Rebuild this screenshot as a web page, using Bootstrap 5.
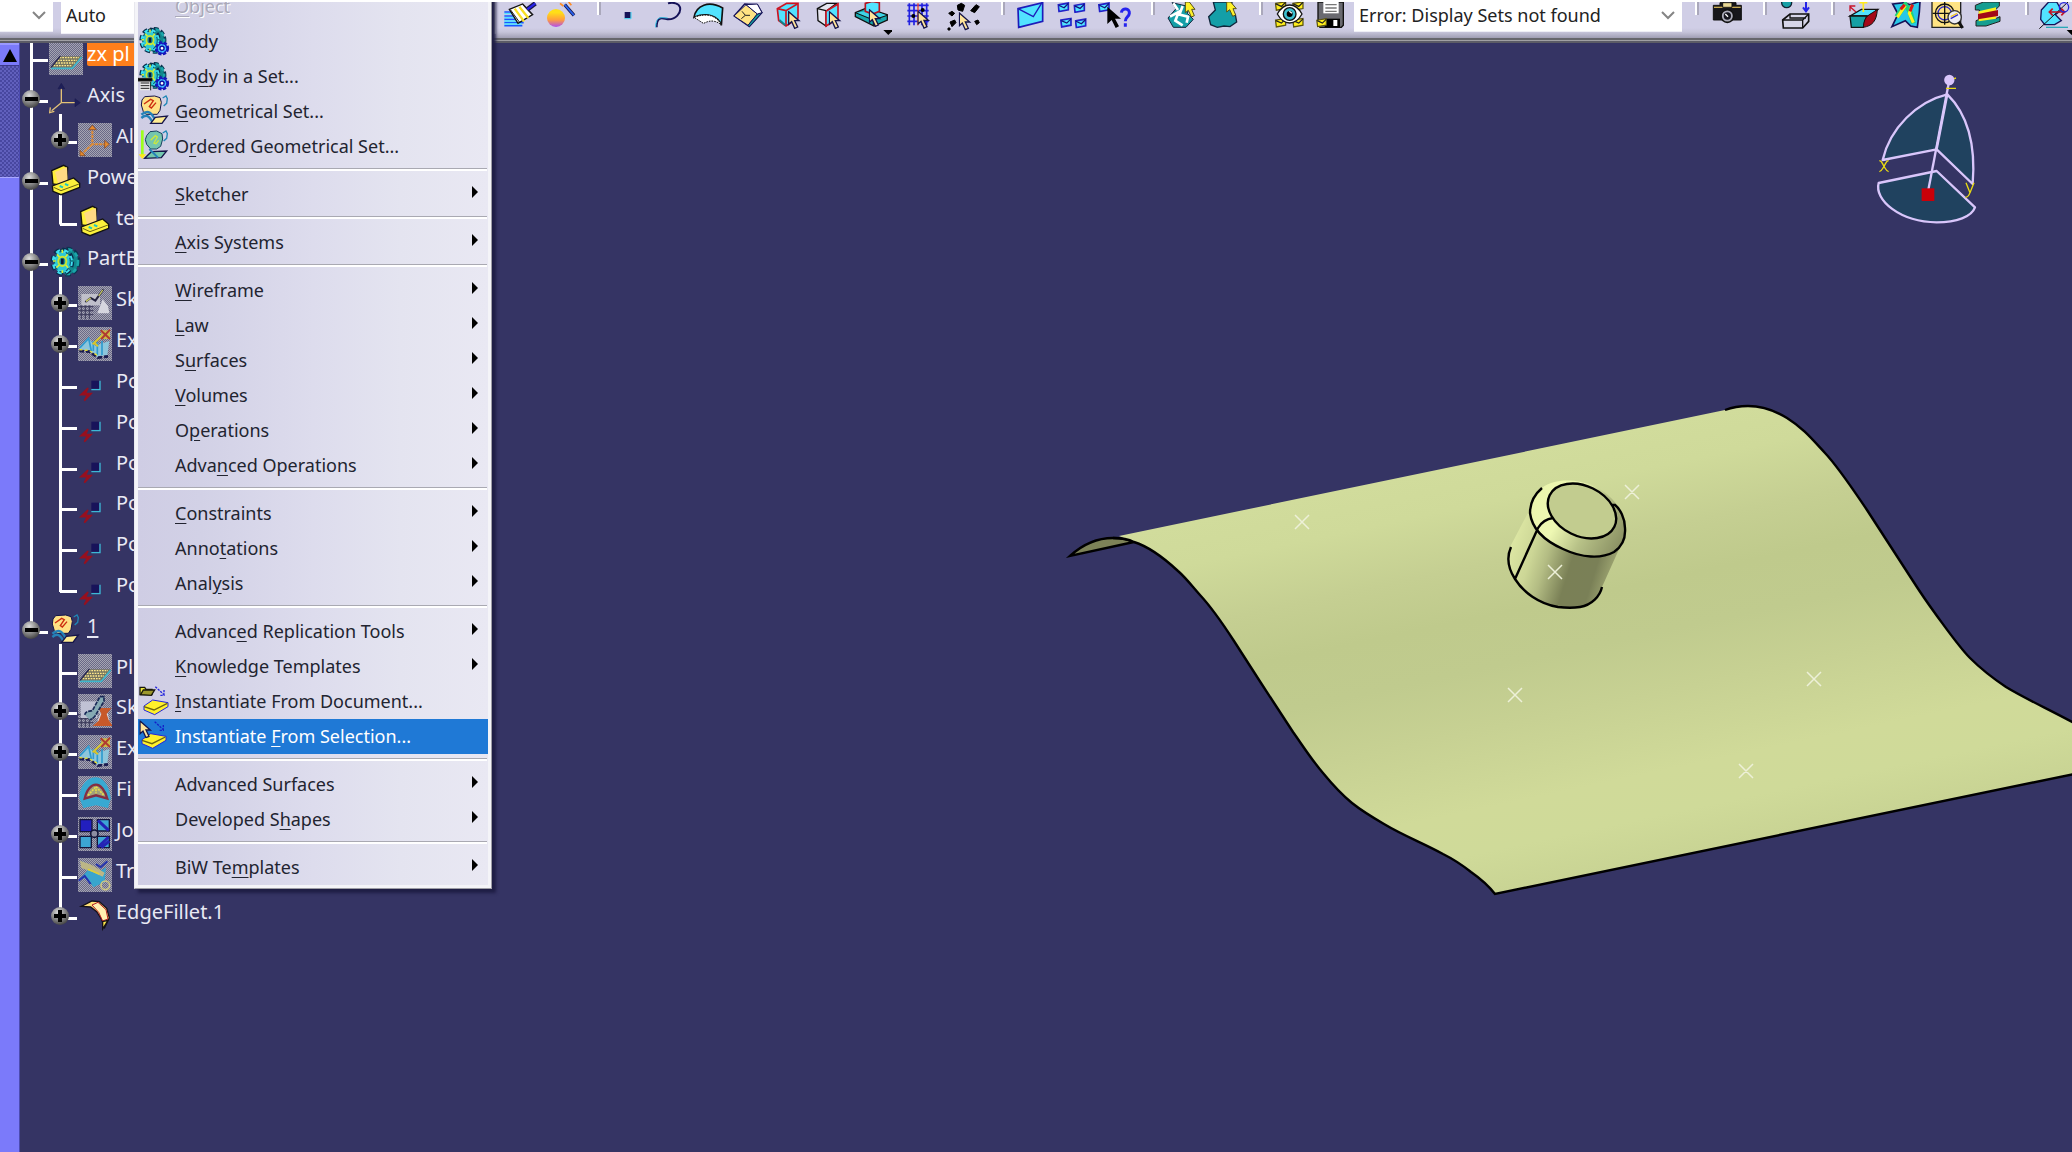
<!DOCTYPE html>
<html lang="en">
<head>
<meta charset="utf-8">
<meta name="viewport" content="width=device-width, initial-scale=1">
<title>Part design</title>
<link rel="stylesheet" href="https://cdn.jsdelivr.net/npm/bootstrap@5.3.0/dist/css/bootstrap.min.css">
<style>
:root{--ink:#353464;--ui:"Noto Sans","Open Sans",sans-serif}
body{font-family:var(--ui);background:var(--ink);border-top:2px solid #fff;overflow:hidden}
.toolstrip{height:41px;background:linear-gradient(#d0cee6 0 26px,#c6c4da 30px,#a09eb4 36px,#66666c 36px,#66666c 38px,#a0a0a4 38px,#a0a0a4 39px,#5c5c66 39px)}
.toolstrip svg{width:40px;height:34px;display:block}
.tool{width:42px;height:34px;padding:0;border:0;border-radius:0;overflow:hidden;flex:none}
.tool-s{width:40px}
.tool-m{width:44px}
.tool-l{width:52px}
.divide{width:24px;height:13px;flex:none;background:linear-gradient(90deg,#fff 2px,#aaa8bb 2px) 13px 0/4px 100% no-repeat}
.divide-w{width:26px}
.combo{height:30px;border:0;border-radius:0;border-bottom:1px solid #efeef6;background:#fff;color:#222;font-size:18px;line-height:24px;padding:0 5px 4px;appearance:none;flex:none;outline:0}
.combo-box{position:relative;flex:none}
.combo-box .chev{position:absolute;right:7px;top:8px;width:14px;height:10px;pointer-events:none}
.combo-a,.combo-a .combo{width:53px}
.combo-b .combo{width:435px;height:32px;padding:0 5px 6px}
.combo-c .combo{width:328px}
.slider-col{width:20px;background:#7b7afa;border-right:1px solid #4c4bb0}
.step{height:22px;padding:0;border:0;background:#7b7afa;display:flex;align-items:center;justify-content:center;border-top:2px solid #9a99ff}
.groove{height:113px;border-top:1px solid #3c3b8c;border-bottom:1px solid #a9a8ff;background:repeating-conic-gradient(#4847a0 0 25%,#6160bd 0 50%) 0 0/4px 4px}
.tree{height:898px;margin-top:-5px;display:grid;grid-auto-rows:1fr;color:#e9e9f4;font-size:20px;line-height:25px}
.node{--a:100%;--b:0;--bp:0;display:flex;align-items:center;background:linear-gradient(#fff,#fff) 10px 0/3px var(--a) no-repeat,linear-gradient(#fff,#fff) 39px var(--bp)/3px var(--b) no-repeat;padding-left:2px;min-height:0}
.node.sub{padding-left:31px;--b:100%}
.node.parent{--b:6px;--bp:100%}
.node.final{--b:calc(50% + 3px)}
.node.tail{--a:0}
.node.stop{--a:50%}
.joint{width:26px;height:18px;flex:none;background:linear-gradient(#fff,#fff) 9px 10px/17px 3px no-repeat;margin-right:1px}
.joint svg{width:18px;height:18px;display:block}
.pic{width:34px;height:34px;flex:none;margin-right:4px}
.node a{color:inherit;text-decoration:none;margin-bottom:9px;white-space:nowrap}
.node a.picked{background:#ff7f1b;color:#fff;width:150px;border-radius:2px}
.node a.under{text-decoration:underline;text-underline-offset:3px}
.popup.dropdown-menu{display:block;position:absolute;left:134px;top:-17px;width:358px;padding:3px;border:1px solid #9d9da5;border-left-color:#e8e8ee;border-radius:0;z-index:5;background:linear-gradient(90deg,#cfcde4 0,#d2d1e6 18%,#dddced 50%,#e4e4f0 75%,#e9e8f3) content-box,#f4f4f8;box-shadow:4px 4px 3px #1f1e45;font-size:18px}
.popup .dropdown-item{height:35px;padding:0 10px 2px 0;display:flex;align-items:center;color:#222430;line-height:24px}
.popup .dropdown-item.active{background:#1f79d6;color:#fff}
.popup .dropdown-item.disabled{color:#aaa9b8;text-shadow:1px 1px #fff}
.popup .dropdown-item u{text-underline-offset:3px}
.popup .slot{width:37px;height:33px;flex:none}
.popup .slot svg{width:34px;height:34px;display:block}
.popup .tip{width:6px;height:12px;margin:0 0 4px auto}
.popup .dropdown-divider{margin:4px 1px 6px 0;height:3px;border:0;border-top:1px solid #a9a9b2;background:#fff;opacity:1}
.scene{position:absolute;inset:0;width:100%;height:100%}
</style>
<script src="https://cdn.jsdelivr.net/npm/bootstrap@5.3.0/dist/js/bootstrap.bundle.min.js"></script>
</head>
<body class="vh-100 d-flex flex-column position-relative">

<svg width="0" height="0" class="position-absolute" aria-hidden="true">
<defs>
<radialGradient id="ball" cx=".4" cy=".3" r=".75"><stop offset="0" stop-color="#ddd"/><stop offset=".5" stop-color="#8b8b8b"/><stop offset="1" stop-color="#3c3c3c"/></radialGradient>
<pattern id="dither" width="6" height="6" patternUnits="userSpaceOnUse"><path fill="#6a6987" d="M0 0h6v6H0z"/><path fill="#a5a5b2" d="M0 0h3v3H0zM3 3h3v3H3z"/></pattern>
<symbol id="minus" viewBox="0 0 18 18"><circle cx="9" cy="9" r="9" fill="url(#ball)"/><path d="M3 7h13v4H3z"/></symbol>
<symbol id="plus" viewBox="0 0 18 18"><circle cx="9" cy="9" r="9" fill="url(#ball)"/><path d="M3 7h4V3h4v4h4v4h-4v4H7v-4H3z"/></symbol>
<symbol id="arrow" viewBox="0 0 6 12"><path d="M0 0l6 6-6 6z"/></symbol>
<symbol id="pointer" viewBox="0 0 40 54"><path d="M2 2v38l9-8 9 20 9-4-9-19h13z" fill="#ffe49a" stroke="#151448" stroke-width="4"/></symbol>
<symbol id="mail" viewBox="0 0 30 24"><path d="M2 6l24-4v16L4 22z" fill="#4fe4ff" stroke="#2322c8" stroke-width="4"/><path d="M3 7l13 6L26 3" fill="none" stroke="#15147a" stroke-width="3"/></symbol>
<symbol id="ymail" viewBox="0 0 30 24"><path d="M2 6l24-4v16L4 22z" fill="#ffee1c" stroke="#5a5410" stroke-width="3"/><path d="M3 7l13 6L26 3" fill="none" stroke="#222" stroke-width="3"/></symbol>
<symbol id="gear" viewBox="0 0 102 102"><ellipse cx="56" cy="50" rx="32" ry="38" fill="#0d6f78" stroke="#0b3550" stroke-width="13" stroke-dasharray="15 8"/><ellipse cx="56" cy="50" rx="31" ry="37" fill="#12878c" stroke="#1aa6aa" stroke-width="8" stroke-dasharray="13 10"/><ellipse cx="40" cy="50" rx="27" ry="34" fill="none" stroke="#0a2d4c" stroke-width="17" stroke-dasharray="15 9"/><ellipse cx="40" cy="50" rx="26" ry="33" fill="#2fc9d4" stroke="#3fe0f2" stroke-width="11" stroke-dasharray="12 12"/><ellipse cx="40" cy="50" rx="24" ry="31" fill="none" stroke="#0d5c74" stroke-width="4" stroke-dasharray="12 8"/><path d="M24 28l8 9M56 28l-7 9M22 68l9-8M57 68l-7-9M40 14v10M12 48h8M40 84v-8" stroke="#d6f03a" stroke-width="5"/><ellipse cx="40" cy="49" rx="12" ry="14" fill="#1b8c9c" stroke="#cbe531" stroke-width="6"/><path d="M36 41h8v16h-8z" fill="#061c3c"/></symbol>
<symbol id="minigear" viewBox="0 0 48 48"><circle cx="24" cy="24" r="16" fill="#2f8cff" stroke="#1515b8" stroke-width="9" stroke-dasharray="9 4"/><circle cx="24" cy="24" r="14" fill="#329bff" stroke="#1717bd" stroke-width="4"/><circle cx="24" cy="24" r="10" fill="none" stroke="#46c8ff" stroke-width="4" stroke-dasharray="6 4"/><circle cx="24" cy="24" r="6" fill="#fff" stroke="#10109a" stroke-width="4"/></symbol>
<symbol id="bodyset" viewBox="0 0 102 102"><use href="#gear" x="0" y="4" width="92" height="92"/><use href="#minigear" x="46" y="48" width="52" height="50"/></symbol>
<symbol id="geoset" viewBox="0 0 102 102"><path d="M12 18l8-10 30-2 16 5 4 14-4 24-8 12H24l-8-8-6-20z" fill="#ffe184" stroke="#151448" stroke-width="3"/><path d="M18 30l20-14 8 4-12 18 6 4 14-16" fill="none" stroke="#cc2c10" stroke-width="4"/><path d="M10 62c22-18 32-4 44 20M10 72c14-12 24-8 34 14" fill="none" stroke="#2582b8" stroke-width="7"/><path d="M38 88l14-18 36-4-16 22z" fill="#ffec92" stroke="#151448" stroke-width="4"/><path d="M74 12l10-6 4 8-2 14-9 8" fill="none" stroke="#1f87b6" stroke-width="4"/></symbol>
<symbol id="orderset" viewBox="0 0 102 102"><path d="M26 20l10-12 20-2 16 8 2 16-6 22-12 8H38l-12-14-4-14z" fill="#74c5ae" stroke="#174060" stroke-width="3"/><path d="M38 34l14-14 6 4-10 18 6 2 8-10" fill="none" stroke="#cbe83d" stroke-width="4"/><path d="M20 88l20-20 46-2-16 20z" fill="#72c7ad" stroke="#151448" stroke-width="4"/><path d="M34 60l26 26" stroke="#2582b8" stroke-width="6"/><path d="M74 12l10-6 4 8-2 14-9 8" fill="none" stroke="#1f87b6" stroke-width="4"/><path d="M13 4v78" stroke="#9dff1d" stroke-width="8"/><path d="M2 76h22L13 90z" fill="#ffe81c"/></symbol>
<symbol id="template" viewBox="0 0 102 102"><path d="M8 20L44 4l12 6-2 40-28 12-14-2z" fill="#fff03a" stroke="#111" stroke-width="4"/><path d="M18 24l36-14 2 40-28 10z" fill="#ffda84"/><path d="M10 66l16-6 48-18 18 16v12L36 92 12 82z" fill="#fbf03c" stroke="#111" stroke-width="4"/><path d="M14 70l22 10 54-20" fill="none" stroke="#6c6410" stroke-width="3"/><path d="M32 66l10 4M48 60l10 4" stroke="#20c6c0" stroke-width="6"/></symbol>
<symbol id="plane" viewBox="0 0 102 102"><path fill="url(#dither)" d="M0 0h102v102H0z"/><path d="M6 80L34 46h64L70 80z" fill="#77755e"/><path d="M14 74h56M20 66h58M26 58h58M32 50h58" stroke="#ffe98c" stroke-width="4" stroke-dasharray="5 3"/><path d="M6 82h64l28-34" fill="none" stroke="#3fb6cc" stroke-width="5"/><path d="M6 79L34 45" stroke="#23224e" stroke-width="4"/></symbol>
<symbol id="axisys" viewBox="0 0 102 102"><path d="M37 12v50L8 86M37 62h46" fill="none" stroke="#e3c276" stroke-width="4"/><path d="M27 20L37 4l10 16zM78 50l16 12-16 12z" fill="#1e1f58" stroke="#1b1b50" stroke-width="2"/><path d="M4 76l-2 16 14-4" fill="none" stroke="#e3c276" stroke-width="4"/></symbol>
<symbol id="absaxis" viewBox="0 0 102 102"><path fill="url(#dither)" d="M0 0h102v102H0z"/><path d="M43 12v52h44M43 64L8 96" fill="none" stroke="#df8d38" stroke-width="6" stroke-dasharray="10 2"/><path d="M32 20L43 6l12 14zM80 52l14 12-14 12zM6 82v16h16z" fill="#e68a2d" stroke="#733c22" stroke-width="2"/></symbol>
<symbol id="sketch" viewBox="0 0 102 102"><path fill="url(#dither)" d="M0 0h102v102H0z"/><path d="M10 24h56v34H10z" fill="#c0c0cb"/><path d="M0 62h46M0 74h46M0 86h46M10 58v42M22 58v42M34 58v42" stroke="#393858" stroke-width="3"/><path d="M22 48l16-12 14 8 24-34" fill="none" stroke="#24233f" stroke-width="6"/><path d="M24 46l14-10M62 30l12-18" stroke="#cccd63" stroke-width="4"/><path d="M58 82l16-42 16 20 4 22z" fill="#d6d6df"/></symbol>
<symbol id="sketchred" viewBox="0 0 102 102"><use href="#sketch"/><path d="M8 22h50v50H8z" fill="#c0c2d4"/><path d="M44 96l18-16 8-20-8-18h38l-14 18 6 18 12 18z" fill="#c8592a"/><path d="M20 62c4-14 18-8 24-14l22-40h12v14L50 68l-14 10" fill="#86aab4" stroke="#182856" stroke-width="5" stroke-dasharray="12 3"/></symbol>
<symbol id="extrude" viewBox="0 0 102 102"><path fill="url(#dither)" d="M0 0h102v102H0z"/><path d="M4 66l26-34 22 24 42-14-6 42-30 6-24-18z" fill="#8dc6dc"/><path d="M6 62l26-28 8 38M58 46v38M72 42v42M46 42v30" fill="none" stroke="#2f9bd0" stroke-width="5"/><path d="M4 72l30 2 26 18 30-4" fill="none" stroke="#191b50" stroke-width="8" stroke-dasharray="14 6"/><path d="M4 68l28 2 28 16" fill="none" stroke="#e8df31" stroke-width="4" stroke-dasharray="9 7"/><path d="M44 52l30-28M46 46l14 12" stroke="#d8c52a" stroke-width="6"/><path d="M70 10h26v26H70z" fill="#c9ba48"/><path d="M68 10l28 26M70 36l26-28" stroke="#b03a31" stroke-width="6"/></symbol>
<symbol id="point" viewBox="0 0 102 102"><path d="M40 38h24v24H40z" fill="#18135a"/><path d="M40 65h26V38" fill="none" stroke="#3cb8d6" stroke-width="4"/><path d="M30 60L9 80h20l-10 18 20-21H22z" fill="#a60c19" stroke="#96101f" stroke-width="5"/></symbol>
<symbol id="fill" viewBox="0 0 102 102"><path fill="url(#dither)" d="M0 0h102v102H0z"/><path d="M4 66C6 24 30 4 54 4s42 30 44 64l-8 28-36-8-38 8z" fill="#38a9d2"/><path d="M20 68c6-28 20-42 34-42s28 18 34 42l-34-10z" fill="#a0a07a" stroke="#842e43" stroke-width="7"/><path d="M30 58l24-26 24 26M54 40v12" fill="none" stroke="#ebdc46" stroke-width="5" stroke-dasharray="6 3"/></symbol>
<symbol id="join" viewBox="0 0 102 102"><path fill="url(#dither)" d="M0 0h102v102H0z"/><path d="M6 8h36v36H6z" fill="#221fbe" stroke="#14153a" stroke-width="4"/><path d="M58 8h36v34H58zM6 58h34v34H6zM58 58h36v34H58z" fill="#3ca5d4" stroke="#14153a" stroke-width="4"/><path d="M60 10l32 30M60 90l32-30M70 92l24-20" stroke="#2422b4" stroke-width="9"/><circle cx="49" cy="50" r="11" fill="#8d8da2" stroke="#14153a" stroke-width="5"/></symbol>
<symbol id="trim" viewBox="0 0 102 102"><path fill="url(#dither)" d="M0 0h102v102H0z"/><path d="M4 64l24-26-16-28 30 16 24 14 18-12-4 44-34 16-18-28z" fill="#39a5cd"/><path d="M6 8l34 12 40 24-6 12-30-14-34-12z" fill="#bcb686"/><path d="M30 34l34 14" stroke="#dccf38" stroke-width="5"/><path d="M2 68l18-14 18 24M54 18l14 10 20-18" fill="none" stroke="#2432ad" stroke-width="6"/><circle cx="82" cy="82" r="13" fill="none" stroke="#cfc883" stroke-width="5"/></symbol>
<symbol id="fillet" viewBox="0 0 102 102"><path d="M10 22L42 6l22 2 22 20 8 28-14 30-10-26-14-22-18-14z" fill="#ffe178" stroke="#141019" stroke-width="4"/><path d="M42 18l18-8 24 22 6 28-16 6-12-26z" fill="#ffefb0" stroke="#b41d22" stroke-width="3"/><path d="M74 68l16-4-16 26z" fill="#ffe94b" stroke="#141019" stroke-width="4"/></symbol>
<symbol id="slab" viewBox="0 0 102 102"><path d="M18 66l26-18 46 8v12L50 92 18 78z" fill="#fff12b" stroke="#2425dc" stroke-width="3"/><path d="M18 68l30 10 40-20" fill="none" stroke="#6c6410" stroke-width="4"/></symbol>
<symbol id="fromdoc" viewBox="0 0 102 102"><path d="M6 10h14l4 6h18v16H6z" fill="#eee83d" stroke="#19190c" stroke-width="4"/><path d="M8 32l8-14h34L40 34z" fill="#9c982d" stroke="#19190c" stroke-width="4"/><path d="M52 8l26 24m0-14v16H64" fill="none" stroke="#2425dc" stroke-width="4" stroke-dasharray="7 3"/><use href="#slab"/></symbol>
<symbol id="fromsel" viewBox="0 0 102 102"><use href="#slab" x="-6" y="-4" width="102" height="102"/><path d="M50 8l26 24m0-14v16H62" fill="none" stroke="#1520c8" stroke-width="4" stroke-dasharray="7 3"/><use href="#pointer" x="4" y="4" width="40" height="54"/></symbol>
</defs>
</svg>

<header class="toolstrip d-flex align-items-start overflow-hidden" role="toolbar" aria-label="Tools">
  <div class="combo-box combo-a me-1">
    <select class="combo" aria-label="Line style"><option></option></select>
    <svg class="chev" viewBox="0 0 14 10"><path d="M1 2l6 6 6-6" fill="none" stroke="#858585" stroke-width="2"/></svg>
  </div>
  <div class="combo-box combo-b ps-1 me-1"><select class="combo" aria-label="Render mode"><option>Auto</option></select></div>

  <button class="btn tool" aria-label="Painter"><svg viewBox="0 0 120 102"><g transform="translate(-24 -6)"><path d="M37 36h34M37 48h44M37 58h52M37 68h58M37 77h54" stroke="#1759ff" stroke-width="5"/><path d="M37 41h34M37 53h44M37 63h50M37 72h52" stroke="#4fe5ff" stroke-width="4"/><path d="M52 28l40-16 30 32-44 26z" fill="#fff" stroke="#111" stroke-width="4"/><path d="M68 26l28 38M82 20l27 34" stroke="#f8df22" stroke-width="7"/><path d="M56 30l26 36M94 16l26 28" stroke="#222" stroke-width="3"/><path d="M106 28l24-18" stroke="#151448" stroke-width="14"/><path d="M106 28l24-18" stroke="#2823e8" stroke-width="7"/></g></svg></button>
  <button class="btn tool" aria-label="Apply material"><svg viewBox="0 0 120 102"><defs><linearGradient id="orb" x2="0" y2="1"><stop offset=".2" stop-color="#ffde17"/><stop offset=".6" stop-color="#ff9d3d"/><stop offset="1" stop-color="#b04df0"/></linearGradient></defs><circle cx="42" cy="48" r="27" fill="url(#orb)"/><path d="M68 8l28 32" stroke="#151448" stroke-width="10"/><path d="M68 8l28 32" stroke="#2b64ef" stroke-width="5"/><path d="M54 4l10 8M80 0l8 10" stroke="#ff8b20" stroke-width="5"/></svg></button>
  <span class="divide"></span>
  <button class="btn tool tool-s" aria-label="Point"><svg viewBox="0 0 120 102"><path d="M50 30h18v18H50z" fill="#151258"/><path d="M49 50h20V30" fill="none" stroke="#3bd2f0" stroke-width="3"/></svg></button>
  <button class="btn tool tool-s" aria-label="Spline"><svg viewBox="0 0 120 102"><path d="M26 76c0-40 22-24 36-24 20 0 38-18 34-36-3-12-20-16-36-12" fill="none" stroke="#151258" stroke-width="6"/><path d="M23 76c0-38 22-28 36-28" fill="none" stroke="#39cdee" stroke-width="3"/></svg></button>
  <button class="btn tool tool-s" aria-label="Surface"><svg viewBox="0 0 120 102"><path d="M18 46C24 10 62-6 104 18l-4 52C90 42 58 30 18 46z" fill="#52e3ff" stroke="#111" stroke-width="5"/><path d="M18 46c40-14 66-6 82 22C70 46 52 64 46 64z" fill="#fff" stroke="#111" stroke-width="3" stroke-dasharray="5 3"/></svg></button>
  <button class="btn tool tool-s" aria-label="Isometric view"><svg viewBox="0 0 120 102"><path d="M18 42L50 6l38 2 14 24-38 42z" fill="#fff" stroke="#151258" stroke-width="4"/><path d="M18 42L54 8l34 28-28 34z" fill="#ffe383" stroke="#151258" stroke-width="3"/><path d="M88 36l14-4-38 42-4-4z" fill="#159c9c" stroke="#151258" stroke-width="3"/><path d="M54 8l34-2 14 26-14 4z" fill="#fff" stroke="#151258" stroke-width="3"/><path d="M42 28l10 12h14M52 40L40 50" stroke="#222" stroke-width="3" fill="none"/></svg></button>
  <button class="btn tool tool-s" aria-label="Pick box"><svg viewBox="0 0 120 102"><path d="M28 20L56 4h34v44L54 72 32 56z" fill="#52e3ff" stroke="#cc1422" stroke-width="5"/><path d="M28 20l26 6 34-20M54 28v44" fill="none" stroke="#cc1422" stroke-width="5"/><path d="M34 54l18 16" stroke="#12808a" stroke-width="6"/><use href="#pointer" x="60" y="26" width="40" height="56"/></svg></button>
  <button class="btn tool tool-s" aria-label="Pick face"><svg viewBox="0 0 120 102"><path d="M28 20L56 4h30L54 28v44L30 56z" fill="#e4e4ee" stroke="#111" stroke-width="4"/><path d="M54 28L90 6v44L54 72z" fill="#52e3ff" stroke="#cc1422" stroke-width="5"/><path d="M28 20l26 6" stroke="#111" stroke-width="4"/><use href="#pointer" x="62" y="26" width="40" height="56"/></svg></button>
  <button class="btn tool tool-l ps-1" aria-label="Pick pad"><svg viewBox="0 0 120 102"><path d="M10 32l34-14 62 20v16L66 72 10 44z" fill="#16a8ae" stroke="#111" stroke-width="4"/><path d="M14 32l50 20 38-12-40-16z" fill="#3fd4e6"/><path d="M10 32l54 22 42-14M64 54v16" fill="none" stroke="#111" stroke-width="3"/><path d="M40 4l20-6 22 4v26l-20 8-22-8z" fill="#52e3ff" stroke="#b51321" stroke-width="5"/><use href="#pointer" x="50" y="20" width="40" height="56"/><path d="M94 84h30l-15 15z"/></svg></button>
  <button class="btn tool tool-m" aria-label="Pick grid"><svg viewBox="0 0 120 102"><path d="M22 10h64M22 26h64M22 42h64M22 58h64M28 4v66M42 4v66M66 4v66M80 4v66" stroke="#2120e0" stroke-width="5"/><path d="M54 4v66" stroke="#ef4325" stroke-width="4"/><circle cx="40" cy="42" r="6"/><circle cx="68" cy="24" r="6"/><use href="#pointer" x="52" y="24" width="40" height="58"/></svg></button>
  <button class="btn tool tool-m" aria-label="Pick points"><svg viewBox="0 0 120 102"><path d="M14 34l10-6 8 6-8 8zM40 10l12-6 10 6-6 18-14-4zM80 26l16-18 10 6-14 18zM18 60l14-6 4 8-12 12zM12 78h6v6h-6zM92 58l10-4 4 8-8 6z" stroke="#000" stroke-width="3"/><use href="#pointer" x="44" y="30" width="40" height="56"/></svg></button>
  <span class="divide"></span>
  <button class="btn tool" aria-label="Send"><svg viewBox="0 0 120 102"><path d="M18 20l74-18v56L20 76z" fill="#52e3ff" stroke="#1d1cba" stroke-width="5"/><path d="M18 20l46 24L90 2" fill="none" stroke="#1d1cba" stroke-width="4"/></svg></button>
  <button class="btn tool" aria-label="Distribute"><svg viewBox="0 0 120 102"><use href="#mail" x="10" y="0" width="38" height="32"/><use href="#mail" x="58" y="2" width="38" height="32"/><use href="#mail" x="18" y="46" width="38" height="32"/><use href="#mail" x="62" y="48" width="38" height="32"/></svg></button>
  <button class="btn tool" aria-label="What's this"><svg viewBox="0 0 120 102"><use href="#mail" x="6" y="0" width="38" height="32"/><path d="M34 14v52l13-12 12 24 10-5-12-23h18z"/><path d="M76 32c2-16 26-14 24 2-1 12-12 10-12 24m0 6v10" fill="none" stroke="#2623ee" stroke-width="9"/></svg></button>
  <span class="divide"></span>
  <button class="btn tool" aria-label="Extract"><svg viewBox="0 0 120 102"><path d="M30 2l12 18-24 28 16 28h38l22-24-18-18 6-20z" fill="#149fa8" stroke="#10263c" stroke-width="3"/><path d="M34 4l14 20M24 44l26-14-10 26 22 14M62 12l-10 26 26 6-4 18" fill="none" stroke="#fff" stroke-width="8"/><path d="M70 0v32l9-7 9 20 9-4-8-19h10L82 0z" fill="#fff12a" stroke="#55511a" stroke-width="3"/></svg></button>
  <button class="btn tool" aria-label="Shape"><svg viewBox="0 0 120 102"><path d="M28 0l6 24-20 20 6 24 20 8 20-4 18 2 20-14-4-22-14-12 4-26z" fill="#149fa8" stroke="#10263c" stroke-width="4"/><path d="M68 0v30l9-7 9 20 9-4-8-19h10L80 0z" fill="#fff12a" stroke="#55511a" stroke-width="3"/></svg></button>
  <span class="divide"></span>
  <button class="btn tool" aria-label="Visualize"><svg viewBox="0 0 120 102"><use href="#ymail" x="14" y="-4" width="38" height="32"/><use href="#ymail" x="66" y="-4" width="38" height="32"/><use href="#ymail" x="14" y="46" width="38" height="32"/><use href="#ymail" x="66" y="46" width="38" height="32"/><path d="M22 36c20-36 54-36 74 0-20 36-54 36-74 0z" fill="#fff" stroke="#151515" stroke-width="4"/><circle cx="59" cy="36" r="19" fill="#3cc0d0" stroke="#111" stroke-width="4"/><circle cx="59" cy="36" r="9"/><path d="M58 28l8 6" stroke="#fff" stroke-width="4"/></svg></button>
  <button class="btn tool" aria-label="Save set"><svg viewBox="0 0 120 102"><path d="M18 0h76v70l-6 6H24l-6-8z" fill="#6a6a70" stroke="#111" stroke-width="4"/><path d="M34 0h46v34H34z" fill="#fff"/><path d="M40 8h34M40 18h34M40 28h34" stroke="#777" stroke-width="4"/><path d="M38 50h46v26H38z"/><path d="M64 54h12v18H64z" fill="#fff"/><use href="#ymail" x="12" y="46" width="36" height="32"/></svg></button>
  <div class="combo-box combo-c">
    <select class="combo" aria-label="Display set"><option>Error: Display Sets not found</option></select>
    <svg class="chev" viewBox="0 0 14 10"><path d="M1 2l6 6 6-6" fill="none" stroke="#858585" stroke-width="2"/></svg>
  </div>
  <span class="divide divide-w"></span>
  <button class="btn tool" aria-label="Capture"><svg viewBox="0 0 120 102"><path d="M16 10h20V2h12v4h22V2h14v8h16v44H16z" fill="#17171b" stroke="#111" stroke-width="3"/><path d="M18 16h80" stroke="#c8aa54" stroke-width="4"/><path d="M44 2h28v14H44z" fill="#ead995" stroke="#111" stroke-width="3"/><circle cx="58" cy="42" r="19" fill="#aaaab8" stroke="#111" stroke-width="5"/><circle cx="58" cy="42" r="11" fill="#15151d"/><path d="M52 36l8 8" stroke="#fff" stroke-width="4"/></svg></button>
  <span class="divide divide-w"></span>
  <button class="btn tool" aria-label="Scan"><svg viewBox="0 0 120 102"><circle cx="32" cy="2" r="15" fill="#159fa6" stroke="#123" stroke-width="4"/><path d="M90 0v26m-9-10l9 12 9-12" fill="none" stroke="#2422e8" stroke-width="6"/><path d="M20 54l22-18h56v22L80 78H22z" fill="#d6d5e8" stroke="#111" stroke-width="5"/><path d="M20 54h60l18-18M80 54v24M42 36v12h48" fill="none" stroke="#111" stroke-width="4"/></svg></button>
  <span class="divide divide-w"></span>
  <button class="btn tool" aria-label="Draft analysis"><svg viewBox="0 0 120 102"><path d="M18 42l34-20h50L80 42z" fill="#52e3ff" stroke="#111" stroke-width="4"/><path d="M18 42h50l-10 34H22z" fill="#16a0a4" stroke="#111" stroke-width="4"/><path d="M58 76c2-38 20-36 42-54-2 36-16 50-42 54z" fill="#a40918" stroke="#111" stroke-width="3"/><path d="M36 30L18 14m0 14V12h16" fill="none" stroke="#c8132a" stroke-width="4"/><path d="M58 30V0M46 2h24" stroke="#ffe91c" stroke-width="5"/></svg></button>
  <button class="btn tool" aria-label="Curvature analysis"><svg viewBox="0 0 120 102"><path d="M20 6l36-4 16 6 30-10-2 32-6 46-20-4-16-16-40 18 18-38z" fill="#28c8e8" stroke="#151258" stroke-width="5"/><path d="M32 44L58 8l14 20 10 36" fill="none" stroke="#20d27a" stroke-width="15"/><path d="M34 46L58 10M78 10l-8 24 12 28" fill="none" stroke="#fff01f" stroke-width="9"/><path d="M44 22l12-14M80 8l-8 20" stroke="#d81818" stroke-width="9"/></svg></button>
  <button class="btn tool" aria-label="Inspect"><svg viewBox="0 0 120 102"><path d="M12 -4h86v80H12z" fill="#ffe383" stroke="#222" stroke-width="4"/><circle cx="50" cy="34" r="28" fill="none" stroke="#111" stroke-width="4"/><circle cx="50" cy="34" r="20" fill="none" stroke="#2825cc" stroke-width="4"/><path d="M50 0v68M14 34h76" stroke="#111" stroke-width="4"/><circle cx="80" cy="46" r="20" fill="#ecebf5" stroke="#333" stroke-width="4"/><path d="M92 60l12 18" stroke="#111" stroke-width="9"/><path d="M68 50l22-12" stroke="#2825cc" stroke-width="4"/><path d="M68 44l20-10" stroke="#f0c42a" stroke-width="4"/></svg></button>
  <button class="btn tool" aria-label="Stress analysis"><svg viewBox="0 0 120 102"><path d="M16 10l24-10h48v12L76 24v26l14-6v14L48 72H18V56l10-4V24H16z" fill="#159e91" stroke="#222" stroke-width="3"/><path d="M26 28l52-12v34l-52 8z" fill="#fff01f"/><path d="M24 36l60-12v18l-60 10z" fill="#a20a17"/></svg></button>
  <span class="divide"></span>
  <button class="btn tool" aria-label="Clearance"><svg viewBox="0 0 120 102"><path d="M16 24L38 0h24l14 24-18 14 18 18-20 12H26L14 52z" fill="#52e3ff" stroke="#151258" stroke-width="4"/><path d="M10 80L96 0" stroke="#111" stroke-width="3"/><path d="M30 76h66" stroke="#2aa9b8" stroke-width="4"/><path d="M40 30h46m-36-10L40 30l10 10m26-20l10 10-10 10" fill="none" stroke="#c51222" stroke-width="5"/><circle cx="84" cy="16" r="14" fill="none" stroke="#2522d8" stroke-width="4"/><path d="M92 84h30l-15 15z"/></svg></button>
</header>

<main class="d-flex flex-grow-1 position-relative overflow-hidden">
  <svg class="scene" viewBox="0 43 2072 1109" preserveAspectRatio="xMidYMin slice" role="img" aria-label="Surface with boss">
    <defs>
      <linearGradient id="sheet" gradientUnits="userSpaceOnUse" x1="1119" y1="536" x2="1207" y2="954"><stop offset="0" stop-color="#d1dc9c"/><stop offset=".1" stop-color="#cfda9a"/><stop offset=".24" stop-color="#c5cf92"/><stop offset=".36" stop-color="#bfca8c"/><stop offset=".48" stop-color="#c0cb8e"/><stop offset=".62" stop-color="#c7d193"/><stop offset=".8" stop-color="#d0da99"/><stop offset=".9" stop-color="#cfda99"/><stop offset="1" stop-color="#c9d494"/></linearGradient>
      <linearGradient id="wall" gradientUnits="userSpaceOnUse" x1="1512" y1="550" x2="1608" y2="580"><stop offset="0" stop-color="#dbe5a2"/><stop offset=".2" stop-color="#ccd696"/><stop offset=".35" stop-color="#b4bd84"/><stop offset=".6" stop-color="#7a8056"/><stop offset=".85" stop-color="#7a8057"/><stop offset="1" stop-color="#99a06e"/></linearGradient>
      <linearGradient id="rim" gradientUnits="userSpaceOnUse" x1="1535" y1="500" x2="1622" y2="550"><stop offset="0" stop-color="#ecf6ae"/><stop offset=".3" stop-color="#eef8b3"/><stop offset=".6" stop-color="#b7c187"/><stop offset="1" stop-color="#868c60"/></linearGradient>
    </defs>
    <path d="M1070 556C1082 545 1096 538 1113 538C1122 538 1128 539 1134 542L1070 556z" fill="#7d8258" stroke="#000" stroke-width="2.4"/>
    <path fill="url(#sheet)" d="M1119 536L1725 410C1733 407 1740 406 1748 406C1760 406 1774 410 1787 418C1803 428 1812 439 1825 453C1839 468 1852 488 1867 510L1913 581C1920 592 1929 605 1937 616C1948 631 1960 648 1970 658C1981 669 1994 679 2006 687C2024 698 2048 709 2074 723V774L1495 894C1488 885 1481 879 1471 872C1461 864 1453 859 1443 854C1423 843 1404 836 1384 824C1372 817 1362 811 1352 803C1341 794 1332 784 1323 773C1311 759 1303 746 1293 732L1261 683L1234 641C1223 624 1213 609 1200 595C1192 586 1186 578 1178 571C1164 558 1150 547 1134 542z"/>
    <path d="M1725 410C1733 407 1740 406 1748 406C1760 406 1774 410 1787 418C1803 428 1812 439 1825 453C1839 468 1852 488 1867 510L1913 581C1920 592 1929 605 1937 616C1948 631 1960 648 1970 658C1981 669 1994 679 2006 687C2024 698 2048 709 2074 723M2074 774L1495 894C1488 885 1481 879 1471 872C1461 864 1453 859 1443 854C1423 843 1404 836 1384 824C1372 817 1362 811 1352 803C1341 794 1332 784 1323 773C1311 759 1303 746 1293 732L1261 683L1234 641C1223 624 1213 609 1200 595C1192 586 1186 578 1178 571C1164 558 1150 547 1134 542C1128 539 1122 538 1113 538" fill="none" stroke="#000" stroke-width="2.4"/>
    <path d="M1530 509L1510 547C1506 558 1508 568 1515 579C1523 592 1539 604 1558 607C1566 608 1574 608 1580 607C1592 605 1600 596 1602 587L1620 547z" fill="url(#wall)"/>
    <path d="M1542 488C1555 478 1577 479 1594 486C1610 494 1624 508 1625 528C1626 541 1620 548 1614 552C1601 559 1582 558 1563 549C1545 541 1532 529 1530 513C1530 503 1535 494 1542 488z" fill="url(#rim)"/>
    <path d="M1511 547C1506 558 1508 568 1515 579C1523 592 1539 604 1558 607C1566 608 1574 608 1580 607C1592 605 1600 596 1602 587M1542 488C1535 494 1530 503 1530 513C1532 529 1545 541 1563 549C1582 558 1601 559 1614 552C1620 548 1626 541 1625 528C1625 518 1620 509 1615 505L1608 505M1553 518C1545 519 1541 523 1538 528L1515 579" fill="none" stroke="#000" stroke-width="2.4"/>
    <ellipse cx="1582" cy="511" rx="36" ry="25" transform="rotate(26 1582 511)" fill="#c2cc8f" stroke="#000" stroke-width="2.4"/>
    <path d="M1295 515l14 14m0-14l-14 14M1625 485l14 14m0-14l-14 14M1548 565l14 14m0-14l-14 14M1508 688l14 14m0-14l-14 14M1807 672l14 14m0-14l-14 14M1739 764l14 14m0-14l-14 14" stroke="#edf0d8" stroke-width="1.5"/>
    <g transform="translate(1840 60) scale(.3333)" stroke="#d9c6fb" stroke-width="7" fill="#20425f" stroke-linejoin="round">
      <path d="M322 103C230 125 150 205 128 300L290 268z"/><path d="M322 103C380 160 408 250 398 372L290 268z"/>
      <path d="M290 333L116 369C102 420 180 486 290 487C350 487 395 470 405 442z"/>
      <path d="M328 60L265 390" fill="none"/><circle cx="328" cy="60" r="12" fill="#d9c6fb"/>
      <path d="M245 385h38v38h-38z" fill="#c90009" stroke="none"/>
      <path d="M318 85h30M342 56l6-2M118 302c8 0 8 8 14 17s8 16 14 16M146 302c-8 0-8 8-14 17s-8 16-14 16M378 368l12 30M402 368l-12 30c-4 12-8 14-14 14" fill="none" stroke="#eadb12" stroke-width="4"/>
    </g>
  </svg>

  <div class="slider-col d-flex flex-column position-relative flex-shrink-0">
    <button class="step" aria-label="Scroll up"><svg width="14" height="13" viewBox="0 0 14 13"><path d="M7 0l7 13H0z"/></svg></button>
    <div class="groove"></div>
  </div>

  <ul class="tree list-unstyled mb-0 flex-grow-1 position-relative">
    <li class="node"><span class="joint"></span><svg class="pic"><use href="#plane"/></svg><a href="#" class="picked">zx pl</a></li>
    <li class="node parent"><span class="joint"><svg><use href="#minus"/></svg></span><svg class="pic"><use href="#axisys"/></svg><a href="#">Axis</a></li>
    <li class="node sub final"><span class="joint"><svg><use href="#plus"/></svg></span><svg class="pic"><use href="#absaxis"/></svg><a href="#">Al</a></li>
    <li class="node parent"><span class="joint"><svg><use href="#minus"/></svg></span><svg class="pic"><use href="#template"/></svg><a href="#">Powe</a></li>
    <li class="node sub final"><span class="joint"></span><svg class="pic"><use href="#template"/></svg><a href="#">te</a></li>
    <li class="node parent"><span class="joint"><svg><use href="#minus"/></svg></span><svg class="pic"><use href="#gear"/></svg><a href="#">PartB</a></li>
    <li class="node sub"><span class="joint"><svg><use href="#plus"/></svg></span><svg class="pic"><use href="#sketch"/></svg><a href="#">Sk</a></li>
    <li class="node sub"><span class="joint"><svg><use href="#plus"/></svg></span><svg class="pic"><use href="#extrude"/></svg><a href="#">Ex</a></li>
    <li class="node sub"><span class="joint"></span><svg class="pic"><use href="#point"/></svg><a href="#">Po</a></li>
    <li class="node sub"><span class="joint"></span><svg class="pic"><use href="#point"/></svg><a href="#">Po</a></li>
    <li class="node sub"><span class="joint"></span><svg class="pic"><use href="#point"/></svg><a href="#">Po</a></li>
    <li class="node sub"><span class="joint"></span><svg class="pic"><use href="#point"/></svg><a href="#">Po</a></li>
    <li class="node sub"><span class="joint"></span><svg class="pic"><use href="#point"/></svg><a href="#">Po</a></li>
    <li class="node sub final"><span class="joint"></span><svg class="pic"><use href="#point"/></svg><a href="#">Po</a></li>
    <li class="node parent stop"><span class="joint"><svg><use href="#minus"/></svg></span><svg class="pic"><use href="#geoset"/></svg><a href="#" class="under">1</a></li>
    <li class="node sub tail"><span class="joint"></span><svg class="pic"><use href="#plane"/></svg><a href="#">Pl</a></li>
    <li class="node sub tail"><span class="joint"><svg><use href="#plus"/></svg></span><svg class="pic"><use href="#sketchred"/></svg><a href="#">Sk</a></li>
    <li class="node sub tail"><span class="joint"><svg><use href="#plus"/></svg></span><svg class="pic"><use href="#extrude"/></svg><a href="#">Ex</a></li>
    <li class="node sub tail"><span class="joint"></span><svg class="pic"><use href="#fill"/></svg><a href="#">Fi</a></li>
    <li class="node sub tail"><span class="joint"><svg><use href="#plus"/></svg></span><svg class="pic"><use href="#join"/></svg><a href="#">Jo</a></li>
    <li class="node sub tail"><span class="joint"></span><svg class="pic"><use href="#trim"/></svg><a href="#">Tr</a></li>
    <li class="node sub tail final"><span class="joint"><svg><use href="#plus"/></svg></span><svg class="pic"><use href="#fillet"/></svg><a href="#">EdgeFillet.1</a></li>
  </ul>
</main>

<div class="popup dropdown-menu show" role="menu" aria-label="Insert">
  <button class="dropdown-item disabled" disabled><span class="slot"></span><span><u>O</u>bject</span></button>
  <button class="dropdown-item"><span class="slot"><svg><use href="#bodyset"/></svg></span><span><u>B</u>ody</span></button>
  <button class="dropdown-item"><span class="slot"><svg viewBox="0 0 102 102"><use href="#bodyset"/><path d="M0 56h42v12h-6v26H6V68H0z" fill="#e8e8e8"/><path d="M0 58h42v8H0zM8 72h26M8 80h26M8 88h26M38 68v26" stroke="#222" stroke-width="3"/></svg></span><span>Bo<u>d</u>y in a Set...</span></button>
  <button class="dropdown-item"><span class="slot"><svg><use href="#geoset"/></svg></span><span><u>G</u>eometrical Set...</span></button>
  <button class="dropdown-item"><span class="slot"><svg><use href="#orderset"/></svg></span><span>O<u>r</u>dered Geometrical Set...</span></button>
  <hr class="dropdown-divider">
  <button class="dropdown-item"><span class="slot"></span><span><u>S</u>ketcher</span><svg class="tip"><use href="#arrow"/></svg></button>
  <hr class="dropdown-divider">
  <button class="dropdown-item"><span class="slot"></span><span><u>A</u>xis Systems</span><svg class="tip"><use href="#arrow"/></svg></button>
  <hr class="dropdown-divider">
  <button class="dropdown-item"><span class="slot"></span><span><u>W</u>ireframe</span><svg class="tip"><use href="#arrow"/></svg></button>
  <button class="dropdown-item"><span class="slot"></span><span><u>L</u>aw</span><svg class="tip"><use href="#arrow"/></svg></button>
  <button class="dropdown-item"><span class="slot"></span><span>S<u>u</u>rfaces</span><svg class="tip"><use href="#arrow"/></svg></button>
  <button class="dropdown-item"><span class="slot"></span><span><u>V</u>olumes</span><svg class="tip"><use href="#arrow"/></svg></button>
  <button class="dropdown-item"><span class="slot"></span><span>O<u>p</u>erations</span><svg class="tip"><use href="#arrow"/></svg></button>
  <button class="dropdown-item"><span class="slot"></span><span>Adva<u>n</u>ced Operations</span><svg class="tip"><use href="#arrow"/></svg></button>
  <hr class="dropdown-divider">
  <button class="dropdown-item"><span class="slot"></span><span><u>C</u>onstraints</span><svg class="tip"><use href="#arrow"/></svg></button>
  <button class="dropdown-item"><span class="slot"></span><span>Anno<u>t</u>ations</span><svg class="tip"><use href="#arrow"/></svg></button>
  <button class="dropdown-item"><span class="slot"></span><span>Anal<u>y</u>sis</span><svg class="tip"><use href="#arrow"/></svg></button>
  <hr class="dropdown-divider">
  <button class="dropdown-item"><span class="slot"></span><span>Advanc<u>e</u>d Replication Tools</span><svg class="tip"><use href="#arrow"/></svg></button>
  <button class="dropdown-item"><span class="slot"></span><span><u>K</u>nowledge Templates</span><svg class="tip"><use href="#arrow"/></svg></button>
  <button class="dropdown-item"><span class="slot"><svg><use href="#fromdoc"/></svg></span><span><u>I</u>nstantiate From Document...</span></button>
  <button class="dropdown-item active"><span class="slot"><svg><use href="#fromsel"/></svg></span><span>Instantiate <u>F</u>rom Selection...</span></button>
  <hr class="dropdown-divider">
  <button class="dropdown-item"><span class="slot"></span><span>Advanced Surfaces</span><svg class="tip"><use href="#arrow"/></svg></button>
  <button class="dropdown-item"><span class="slot"></span><span>Developed S<u>h</u>apes</span><svg class="tip"><use href="#arrow"/></svg></button>
  <hr class="dropdown-divider">
  <button class="dropdown-item"><span class="slot"></span><span>BiW Te<u>m</u>plates</span><svg class="tip"><use href="#arrow"/></svg></button>
</div>
</body>
</html>
